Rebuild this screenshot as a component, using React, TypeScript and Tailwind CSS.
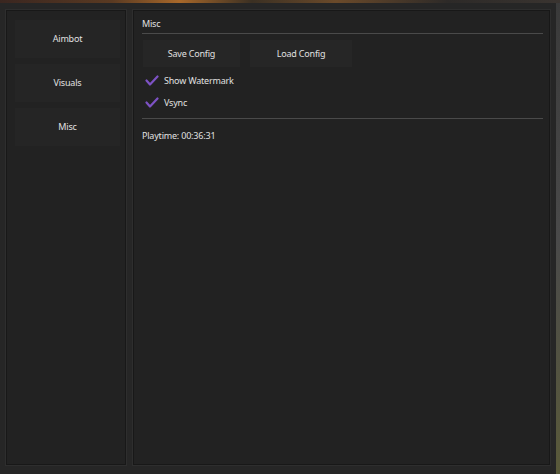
import React from "react";

const font = { fontFamily: '"Noto Sans", "Open Sans", sans-serif' };

function Check() {
  return (
    <svg width="14" height="12" viewBox="0 0 14 12" className="shrink-0">
      <polyline points="1.5,5.5 5,9.5 12.5,1.5" fill="none" stroke="#7d52c4" strokeWidth="2.2" strokeLinecap="round" strokeLinejoin="round" />
    </svg>
  );
}

export default function App() {
  return (
    <div className="w-[560px] h-[474px] bg-[#262626] flex flex-col overflow-hidden text-[#e0e0e0] text-[9px] tracking-[-0.2px]" style={font}>
      <div className="h-[3px] shrink-0 bg-[linear-gradient(90deg,#3a2620_0%,#5a3a22_20%,#a8682a_32%,#3b3023_45%,#6b4a2a_60%,#2d2a28_80%,#3a3430_100%)]" />
      <div className="flex flex-1">
        <div className="flex flex-1 pl-[6px] pr-[6px] pt-[7px] pb-[9px] gap-[7px]">
          <div className="w-[120px] shrink-0 bg-[#222222] border border-[#181818] shadow-[0_0_0_1px_#2e2e2e] flex flex-col gap-[6px] pl-[8px] pt-[9px]">
            {["Aimbot", "Visuals", "Misc"].map((t) => (
              <div key={t} className="w-[105px] h-[38px] bg-[#252525] flex items-center justify-center">
                {t}
              </div>
            ))}
          </div>
          <div className="flex-1 bg-[#222222] border border-[#181818] shadow-[0_0_0_1px_#2e2e2e] flex flex-col pl-[8px] pr-[6px]">
            <div className="h-[23px] flex items-center pt-[4px] border-b border-[#4a4a4a]">Misc</div>
            <div className="flex gap-[10px] mt-[6px] ml-[1px]">
              <div className="w-[97px] h-[27px] bg-[#262626] flex items-center justify-center">Save Config</div>
              <div className="w-[102px] h-[27px] bg-[#262626] flex items-center justify-center">Load Config</div>
            </div>
            <div className="flex items-center gap-[5px] mt-[7px] h-[14px] pl-[3px]">
              <Check />
              <span>Show Watermark</span>
            </div>
            <div className="flex items-center gap-[5px] mt-[8px] h-[14px] pl-[3px]">
              <Check />
              <span>Vsync</span>
            </div>
            <div className="border-b border-[#4a4a4a] mt-[8px]" />
            <div className="mt-[10px]">Playtime: 00:36:31</div>
          </div>
        </div>
        <div className="w-[4px] shrink-0 bg-[linear-gradient(180deg,#3a3a3a_0%,#4a4a4a_50%,#5a5a3a_100%)]" />
      </div>
    </div>
  );
}
